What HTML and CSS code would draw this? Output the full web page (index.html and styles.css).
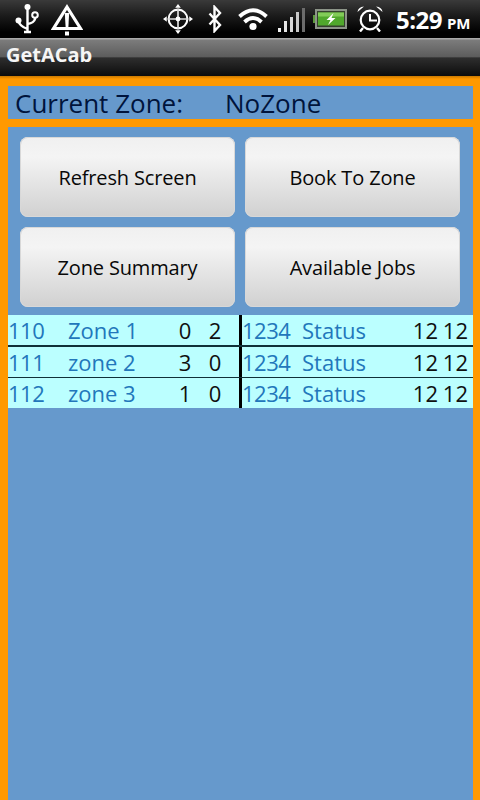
FILE: index.html
```html
<!DOCTYPE html>
<html lang="en">
<head>
<meta charset="utf-8">
<title>GetACab</title>
<link rel="stylesheet" href="styles.css">
</head>
<body>
<div class="status">
  <div class="status-left">
    <svg class="ic usb" viewBox="0 0 24 30"><circle cx="12.500" cy="3" r="3" fill="#fff"/><path d="M12.500 3V27.500M9 28H16M3.500 17Q4.500 22 12.500 25M20 13.500V15Q19 19 12.500 20" fill="none" stroke="#fff" stroke-width="2.400"/><circle cx="3.500" cy="16.500" r="3" fill="#fff"/><circle cx="20" cy="11" r="2.800" fill="none" stroke="#fff" stroke-width="2"/></svg>
    <svg class="ic warn" viewBox="0 0 32 34"><path d="M16 5L29.500 26.500H2.500Z" fill="none" stroke="#fff" stroke-width="3.200"/><path d="M13.800 11H18.200L17.300 26H14.700Z" fill="#fff"/><path d="M14 29.500H18V33.500H14Z" fill="#fff"/></svg>
  </div>
  <div class="status-right">
    <svg class="ic gps" viewBox="0 0 32 32"><circle cx="16" cy="16" r="10" fill="none" stroke="#fff" stroke-width="2.200"/><path d="M16 5V27M5 16H27" stroke="#ddd" stroke-width="1.800"/><circle cx="16" cy="16" r="2.600" fill="#fff"/><path d="M16 0L19 4H13ZM16 32L13 28H19ZM0 16L4 13V19ZM32 16L28 19V13Z" fill="#fff"/></svg>
    <svg class="ic bt" viewBox="0 0 14 28"><path d="M1.500 8.500L12 20L6.500 26V2L12 8L1.500 19.500" fill="none" stroke="#fff" stroke-width="2.400"/></svg>
    <svg class="ic wifi" viewBox="0 0 30 24"><path d="M1.500 9.500Q15 -3 28.500 9.500M6.500 15Q15 7 23.500 15" fill="none" stroke="#fff" stroke-width="3.800"/><circle cx="15" cy="19.500" r="3.600" fill="#fff"/></svg>
    <svg class="ic signal" viewBox="0 0 28 24"><path d="M0 20h3v4H0Z" fill="#f0f0f0"/><path d="M6 13h3v11H6Z" fill="#e4e4e4"/><path d="M12 9h3v15h-3Z" fill="#d8d8d8"/><path d="M18 4h3v20h-3Z" fill="#c8c8c8"/><path d="M24 0h3v24h-3Z" fill="#6c6c6c"/></svg>
    <svg class="ic batt" viewBox="0 0 34 20"><path d="M0 6H3V14H0Z" fill="#5c9a3c"/><rect x="3" y="1" width="30" height="18" fill="#35402e" stroke="#8c9488" stroke-width="2"/><rect x="5" y="3.500" width="26" height="13" fill="#50a82c"/><rect x="5" y="3.500" width="26" height="4" fill="#82cc58"/><path d="M20.500 4L13.500 11H17.500L15 16L22.500 9H18.500Z" fill="#fff"/></svg>
    <svg class="ic clock" viewBox="0 0 26 26"><circle cx="13" cy="14" r="9.300" fill="none" stroke="#fff" stroke-width="2.200"/><path d="M13 8V14.500H20" fill="none" stroke="#fff" stroke-width="2"/><path d="M0.500 6Q1 1 7 0.500ZM25.500 6Q25 1 19 0.500Z" fill="#fff"/><path d="M6 22L3 25.500M20 22L23 25.500" stroke="#fff" stroke-width="2.400"/></svg>
    <div class="time">5:29<span class="ampm">PM</span></div>
  </div>
</div>
<div class="titlebar">GetACab</div>
<main class="root">
  <div class="zone-box"><span class="zone-label">Current Zone:</span><span class="zone-value">NoZone</span></div>
  <section class="panel">
    <div class="buttons">
      <button class="btn">Refresh Screen</button>
      <button class="btn">Book To Zone</button>
      <button class="btn">Zone Summary</button>
      <button class="btn">Available Jobs</button>
    </div>
    <div class="table">
      <div class="row thick">
        <span class="id">110</span><span class="name">Zone 1</span><span class="num">0</span><span class="num">2</span><span></span><i class="divider"></i>
        <span class="id">1234</span><span class="name">Status</span><span class="val">12</span><span class="val">12</span>
      </div>
      <div class="row thin">
        <span class="id">111</span><span class="name">zone 2</span><span class="num">3</span><span class="num">0</span><span></span><i class="divider"></i>
        <span class="id">1234</span><span class="name">Status</span><span class="val">12</span><span class="val">12</span>
      </div>
      <div class="row last">
        <span class="id">112</span><span class="name">zone 3</span><span class="num">1</span><span class="num">0</span><span></span><i class="divider"></i>
        <span class="id">1234</span><span class="name">Status</span><span class="val">12</span><span class="val">12</span>
      </div>
    </div>
  </section>
</main>
</body>
</html>
```
FILE: styles.css
```css
* { box-sizing: border-box; }
html, body { margin: 0; height: 800px; overflow: hidden; }
body {
  width: 480px;
  display: flex;
  flex-direction: column;
  font-family: "Open Sans", "Noto Sans", sans-serif;
  background: #ff9900;
}
.status {
  height: 38px;
  flex: none;
  display: flex;
  justify-content: space-between;
  align-items: center;
  background: linear-gradient(#3a3a3a 0, #1c1c1c 40%, #000 85%);
}
.status-left, .status-right { display: flex; align-items: center; height: 38px; }
.ic { display: block; flex: none; }
.usb { width: 24px; height: 30px; margin-left: 15px; }
.warn { width: 32px; height: 34px; margin-left: 12px; }
.gps { width: 30px; height: 30px; }
.bt { width: 14px; height: 28px; margin-left: 15px; }
.wifi { width: 30px; height: 24px; margin-left: 16px; }
.signal { width: 28px; height: 24px; margin-left: 10px; margin-top: 2px; }
.batt { width: 34px; height: 20px; margin-left: 7px; }
.clock { width: 26px; height: 26px; margin-left: 10px; }
.time {
  margin-left: 13px;
  width: 84px;
  color: #fff;
  font-size: 24px;
  font-weight: 700;
  letter-spacing: -0.5px;
  white-space: nowrap;
}
.ampm { margin-left: 5px; font-size: 15px; letter-spacing: -0.2px; }
.titlebar {
  height: 38px;
  flex: none;
  padding-left: 6px;
  line-height: 34px;
  color: #f6f6f6;
  font-size: 20px;
  font-weight: 700;
  background: linear-gradient(#a8a8a8 0, #a8a8a8 1px, #7c7c7c 2px, #5c5c5c 50%, #2e2e2e 52%, #0c0c0c 100%);
}
.root {
  flex: 1;
  display: flex;
  flex-direction: column;
  gap: 8px;
  padding: 10px 7px 0 8px;
  background: linear-gradient(#c87800 0, #ff9900 3px);
}
.zone-box {
  height: 33px;
  flex: none;
  display: flex;
  align-items: center;
  padding-left: 7px;
  background: #6699cc;
  color: #00143c;
  font-size: 26px;
}
.zone-label { width: 210px; }
.panel {
  flex: 1;
  padding-top: 10px;
  background: #6699cc;
}
.buttons {
  display: grid;
  grid-template-columns: 215px 215px;
  grid-auto-rows: 80px;
  gap: 10px;
  padding-left: 12px;
}
.btn {
  border: 0;
  padding: 0;
  border-radius: 8px;
  font-family: inherit;
  font-size: 20px;
  letter-spacing: -0.15px;
  color: #080808;
  background: linear-gradient(#f0f0f0 0, #f4f4f4 25%, #d0d0d0 100%);
  box-shadow: inset 0 0 0 1px #d8d8d8;
}
.table { margin-top: 8px; background: #bbffff; }
.row {
  display: grid;
  grid-template-columns: 60px 102px 30px 30px 9px 3px 60px 106px 30px 30px;
  font-size: 22px;
  line-height: 30px;
  color: #101010;
}
.thick { height: 32px; border-bottom: 2px solid #103038; }
.thin { height: 31px; border-bottom: 1px solid #103038; }
.last { height: 30px; }
.divider { background: #000; }
.id, .name { color: #2277bb; }
.id { letter-spacing: -0.5px; }
.num { text-align: center; }
.val { text-align: right; }
```
